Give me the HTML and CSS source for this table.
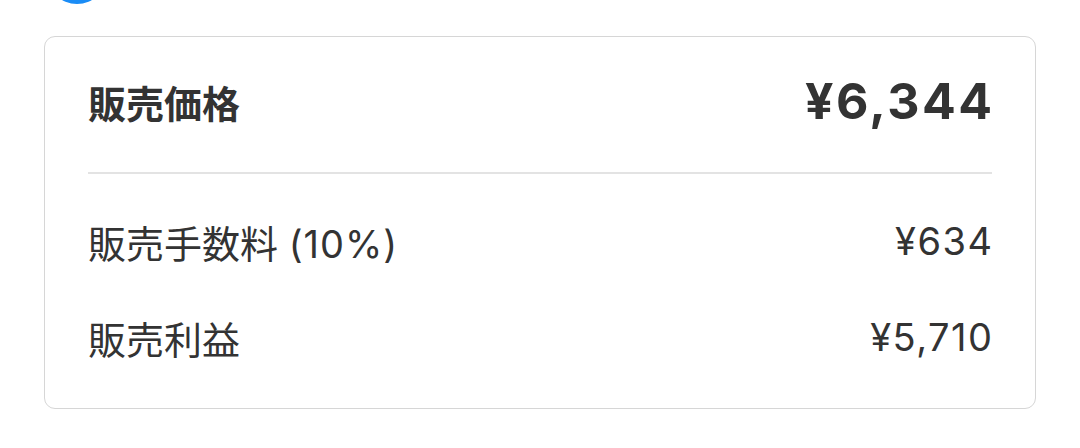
FILE: index.html
```html
<!DOCTYPE html>
<html lang="ja">
<head>
<meta charset="utf-8">
<link rel="stylesheet" href="styles.css">
</head>
<body>
<div class="page">
  <div class="step-dot"></div>
  <section class="card">
    <div class="card-head">
      <span class="head-label">販売価格</span>
      <span class="head-price">¥6,344</span>
    </div>
    <div class="divider"></div>
    <div class="rows">
      <div class="row">
        <span class="row-label">販売手数料 <span class="latin">(10%)</span></span>
        <span class="row-value">¥634</span>
      </div>
      <div class="row">
        <span class="row-label">販売利益</span>
        <span class="row-value">¥5,710</span>
      </div>
    </div>
  </section>
</div>
</body>
</html>
```

FILE: styles.css
```css
html, body {
  margin: 0;
  padding: 0;
  background: #ffffff;
}

body {
  width: 1080px;
  height: 448px;
  overflow: hidden;
  font-family: Inter, "Noto Sans CJK JP", sans-serif;
  color: #333333;
}

.page {
  padding: 0 44px 0 44px;
}

.step-dot {
  width: 60px;
  height: 60px;
  border-radius: 50%;
  background: #1a8cf6;
  margin-top: -56px;
  margin-left: 3px;
}

.card {
  margin-top: 32px;
  width: 992px;
  box-sizing: border-box;
  border: 1.5px solid #d6d6d6;
  border-radius: 11px;
  padding: 0 43px;
}

.card-head {
  height: 135px;
  box-sizing: border-box;
  padding-bottom: 7px;
  display: flex;
  align-items: center;
  justify-content: space-between;
}

.head-label {
  font-size: 38px;
  font-weight: 700;
}

.head-price {
  font-size: 50px;
  font-weight: 700;
  letter-spacing: 2.4px;
  margin-right: -2.4px;
}

.divider {
  height: 2px;
  background: #e3e3e3;
}

.rows {
  padding: 19px 0 23px;
}

.row {
  height: 96px;
  display: flex;
  align-items: center;
  justify-content: space-between;
  font-size: 38px;
}

.row-label {
  font-weight: 400;
}

.latin {
  letter-spacing: 1px;
}

.row-value {
  font-weight: 400;
  letter-spacing: 1.5px;
  margin-right: -1.5px;
}
```
